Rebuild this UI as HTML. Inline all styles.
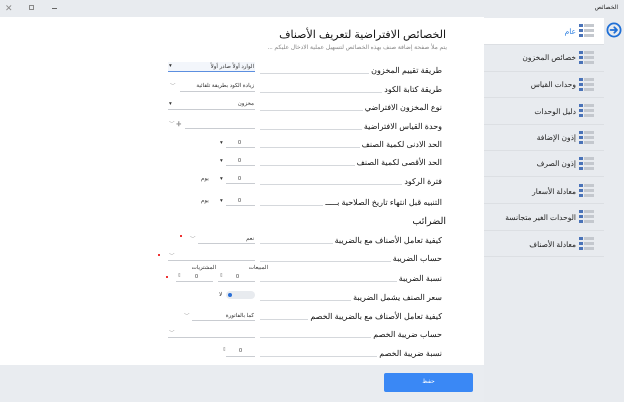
<!DOCTYPE html>
<html><head><meta charset="utf-8"><style>
*{margin:0;padding:0;box-sizing:border-box}
body{width:624px;height:402px;overflow:hidden;background:#e8ebef;font-family:"Liberation Sans","Noto Sans CJK SC",sans-serif;color:#222;position:relative}
.a{position:absolute}
.t{position:absolute;font-size:7.5px;white-space:nowrap;text-align:right;direction:rtl}
.r{position:absolute;left:260px;width:182px;height:10px;display:flex;direction:rtl;align-items:flex-end}
.r span{font-size:8px;color:#111;white-space:nowrap;line-height:10px}
.r em{flex:1;height:1px;background:#d5d8dc;margin-right:2px;margin-bottom:2px}
.ul{position:absolute;height:1px;background:#c9ccd1}
.sm{font-size:5.5px;color:#333}
.ic{position:absolute;width:15px;height:13px}
.ic i{position:absolute;left:0;width:4px;height:3px;background:#4a73b8}
.ic b{position:absolute;left:5px;width:10px;height:3px;background:#c4c8ce}
.st{position:absolute;right:48px;font-size:7.5px;direction:rtl;white-space:nowrap}
.dv{position:absolute;left:484px;width:120px;height:1px;background:#dcdfe3}
</style></head><body>
<div class="a" style="left:0;top:0;width:624px;height:17px;background:#e8ebef"></div>
<div class="t" style="right:6px;top:4px;font-size:6px">الخصائص</div>
<div class="a" style="left:5px;top:3px;font-size:9px;color:#888">✕</div>
<div class="a" style="left:29px;top:5px;width:5px;height:5px;border:1.3px solid #888"></div>
<div class="a" style="left:52px;top:8px;width:5px;height:1px;background:#666"></div>

<div class="a" style="left:0;top:17px;width:484px;height:348px;background:#fff"></div>
<div class="a" style="left:0;top:365px;width:484px;height:37px;background:#e9ecf0;border-top-right-radius:4px"></div>
<div class="a" style="left:384px;top:373px;width:89px;height:19px;background:#3a88f5;border-radius:2px;color:#fff;font-size:6px;text-align:center;line-height:19px">حفظ</div>

<div class="a" style="left:484px;top:18px;width:120px;height:26px;background:#fff"></div>
<svg class="a" style="left:606px;top:22px" width="16" height="16" viewBox="0 0 16 16"><circle cx="8" cy="8" r="6.6" fill="none" stroke="#1f6fd6" stroke-width="1.8"/><path d="M4.5 8H11M8.3 5.3L11 8L8.3 10.7" fill="none" stroke="#1f6fd6" stroke-width="1.8" stroke-linecap="round" stroke-linejoin="round"/></svg>

<div class="ic" style="left:579px;top:24px"><i style="top:0"></i><b style="top:0"></b><i style="top:5px"></i><b style="top:5px"></b><i style="top:10px"></i><b style="top:10px"></b></div>
<div class="st" style="top:27px;color:#2a7de0">عام</div>
<div class="dv" style="top:44px"></div>
<div class="ic" style="left:579px;top:51px"><i style="top:0"></i><b style="top:0"></b><i style="top:5px"></i><b style="top:5px"></b><i style="top:10px"></i><b style="top:10px"></b></div>
<div class="st" style="top:53px">خصائص المخزون</div>
<div class="dv" style="top:71px"></div>
<div class="ic" style="left:579px;top:78px"><i style="top:0"></i><b style="top:0"></b><i style="top:5px"></i><b style="top:5px"></b><i style="top:10px"></i><b style="top:10px"></b></div>
<div class="st" style="top:80px">وحدات القياس</div>
<div class="dv" style="top:97px"></div>
<div class="ic" style="left:579px;top:104px"><i style="top:0"></i><b style="top:0"></b><i style="top:5px"></i><b style="top:5px"></b><i style="top:10px"></i><b style="top:10px"></b></div>
<div class="st" style="top:107px">دليل الوحدات</div>
<div class="dv" style="top:124px"></div>
<div class="ic" style="left:579px;top:131px"><i style="top:0"></i><b style="top:0"></b><i style="top:5px"></i><b style="top:5px"></b><i style="top:10px"></i><b style="top:10px"></b></div>
<div class="st" style="top:133px">إذون الإضافة</div>
<div class="dv" style="top:150px"></div>
<div class="ic" style="left:579px;top:157px"><i style="top:0"></i><b style="top:0"></b><i style="top:5px"></i><b style="top:5px"></b><i style="top:10px"></i><b style="top:10px"></b></div>
<div class="st" style="top:159px">إذون الصرف</div>
<div class="dv" style="top:176px"></div>
<div class="ic" style="left:579px;top:184px"><i style="top:0"></i><b style="top:0"></b><i style="top:5px"></i><b style="top:5px"></b><i style="top:10px"></i><b style="top:10px"></b></div>
<div class="st" style="top:187px">معادلة الأسعار</div>
<div class="dv" style="top:203px"></div>
<div class="ic" style="left:579px;top:210px"><i style="top:0"></i><b style="top:0"></b><i style="top:5px"></i><b style="top:5px"></b><i style="top:10px"></i><b style="top:10px"></b></div>
<div class="st" style="top:213px">الوحدات الغير متجانسة</div>
<div class="dv" style="top:230px"></div>
<div class="ic" style="left:579px;top:237px"><i style="top:0"></i><b style="top:0"></b><i style="top:5px"></i><b style="top:5px"></b><i style="top:10px"></i><b style="top:10px"></b></div>
<div class="st" style="top:240px">معادلة الأصناف</div>
<div class="dv" style="top:256px"></div>

<div class="t" style="right:178px;top:28px;font-size:11px;color:#111">الخصائص الافتراضية لتعريف الأصناف</div>
<div class="t" style="right:177px;top:44px;font-size:6px;color:#888">يتم ملأ صفحة إضافة صنف بهذه الخصائص لتسهيل عملية الادخال عليكم ...</div>

<div class="r" style="top:66px"><span>طريقة تقييم المخزون</span><em></em></div>
<div class="a" style="left:168px;top:62px;width:87px;height:10px;background:#f3f6fb;border-bottom:1px solid #5c8fe0"></div><div class="t sm" style="right:370px;top:64px">الوارد أولاً صادر أولاً</div><div class="a sm" style="left:169px;top:63px">▾</div>

<div class="r" style="top:85px"><span>طريقة كتابة الكود</span><em></em></div>
<div class="ul" style="left:180px;top:91px;width:75px"></div><div class="t sm" style="right:370px;top:83px">زيادة الكود بطريقة تلقائية</div><div class="a sm" style="left:170px;top:82px;color:#999">﹀</div>

<div class="r" style="top:103px"><span>نوع المخزون الافتراضي</span><em></em></div>
<div class="ul" style="left:168px;top:109px;width:87px"></div><div class="t sm" style="right:370px;top:101px">مخزون</div><div class="a sm" style="left:169px;top:101px">▾</div>

<div class="r" style="top:122px"><span>وحدة القياس الافتراضية</span><em></em></div>
<div class="ul" style="left:185px;top:128px;width:70px"></div><div class="a sm" style="left:169px;top:120px;color:#999">﹀ ✚</div>

<div class="r" style="top:140px"><span>الحد الادنى لكمية الصنف</span><em></em></div>
<div class="ul" style="left:226px;top:147px;width:29px"></div><div class="a sm" style="left:238px;top:140px">0</div><div class="a sm" style="left:220px;top:140px">▾</div>

<div class="r" style="top:158px"><span>الحد الأقصى لكمية الصنف</span><em></em></div>
<div class="ul" style="left:226px;top:165px;width:29px"></div><div class="a sm" style="left:238px;top:158px">0</div><div class="a sm" style="left:220px;top:158px">▾</div>

<div class="r" style="top:177px"><span>فترة الركود</span><em></em></div>
<div class="ul" style="left:226px;top:183px;width:29px"></div><div class="a sm" style="left:238px;top:176px">0</div><div class="a sm" style="left:220px;top:176px">▾</div><div class="a sm" style="left:201px;top:176px">يوم</div>

<div class="r" style="top:198px"><span>التنبيه قبل انتهاء تاريخ الصلاحية بـــــ</span><em></em></div>
<div class="ul" style="left:226px;top:205px;width:29px"></div><div class="a sm" style="left:238px;top:198px">0</div><div class="a sm" style="left:220px;top:198px">▾</div><div class="a sm" style="left:201px;top:198px">يوم</div>

<div class="t" style="right:178px;top:216px;font-size:9.5px;color:#111">الضرائب</div>

<div class="r" style="top:236px"><span>كيفية تعامل الأصناف مع بالضريبة</span><em></em></div>
<div class="ul" style="left:198px;top:243px;width:57px"></div><div class="t sm" style="right:370px;top:236px">نعم</div><div class="a sm" style="left:190px;top:235px;color:#999">﹀</div><div class="a" style="left:180px;top:235px;width:2px;height:2px;background:#e33"></div>

<div class="r" style="top:254px"><span>حساب الضريبة</span><em></em></div>
<div class="ul" style="left:168px;top:260px;width:87px"></div><div class="a sm" style="left:169px;top:252px;color:#999">﹀</div><div class="a" style="left:158px;top:254px;width:2px;height:2px;background:#e33"></div>

<div class="t sm" style="right:356px;top:265px">المبيعات</div><div class="t sm" style="right:408px;top:265px">المشتريات</div>
<div class="r" style="top:274px"><span>نسبة الضريبة</span><em></em></div>
<div class="ul" style="left:218px;top:281px;width:37px"></div><div class="a sm" style="left:236px;top:274px">0</div><div class="a sm" style="left:219px;top:273px;color:#999">⇕</div>
<div class="ul" style="left:176px;top:281px;width:37px"></div><div class="a sm" style="left:195px;top:274px">0</div><div class="a sm" style="left:177px;top:273px;color:#999">⇕</div>
<div class="a" style="left:166px;top:276px;width:2px;height:2px;background:#e33"></div>

<div class="r" style="top:293px"><span>سعر الصنف يشمل الضريبة</span><em></em></div>
<div class="a" style="left:226px;top:291px;width:29px;height:8px;border-radius:4px;background:#e8ebef"></div><div class="a" style="left:228px;top:293px;width:4px;height:4px;border-radius:50%;background:#2a6fd6"></div><div class="a sm" style="left:219px;top:292px">لا</div>

<div class="r" style="top:312px"><span>كيفية تعامل الأصناف مع بالضريبة الخصم</span><em></em></div>
<div class="ul" style="left:192px;top:320px;width:63px"></div><div class="t sm" style="right:370px;top:313px">كما بالفاتورة</div><div class="a sm" style="left:184px;top:312px;color:#999">﹀</div>

<div class="r" style="top:330px"><span>حساب ضريبة الخصم</span><em></em></div>
<div class="ul" style="left:168px;top:337px;width:87px"></div><div class="a sm" style="left:169px;top:329px;color:#999">﹀</div>

<div class="r" style="top:349px"><span>نسبة ضريبة الخصم</span><em></em></div>
<div class="ul" style="left:226px;top:356px;width:29px"></div><div class="a sm" style="left:239px;top:348px">0</div><div class="a sm" style="left:222px;top:347px;color:#999">⇕</div>
</body></html>
